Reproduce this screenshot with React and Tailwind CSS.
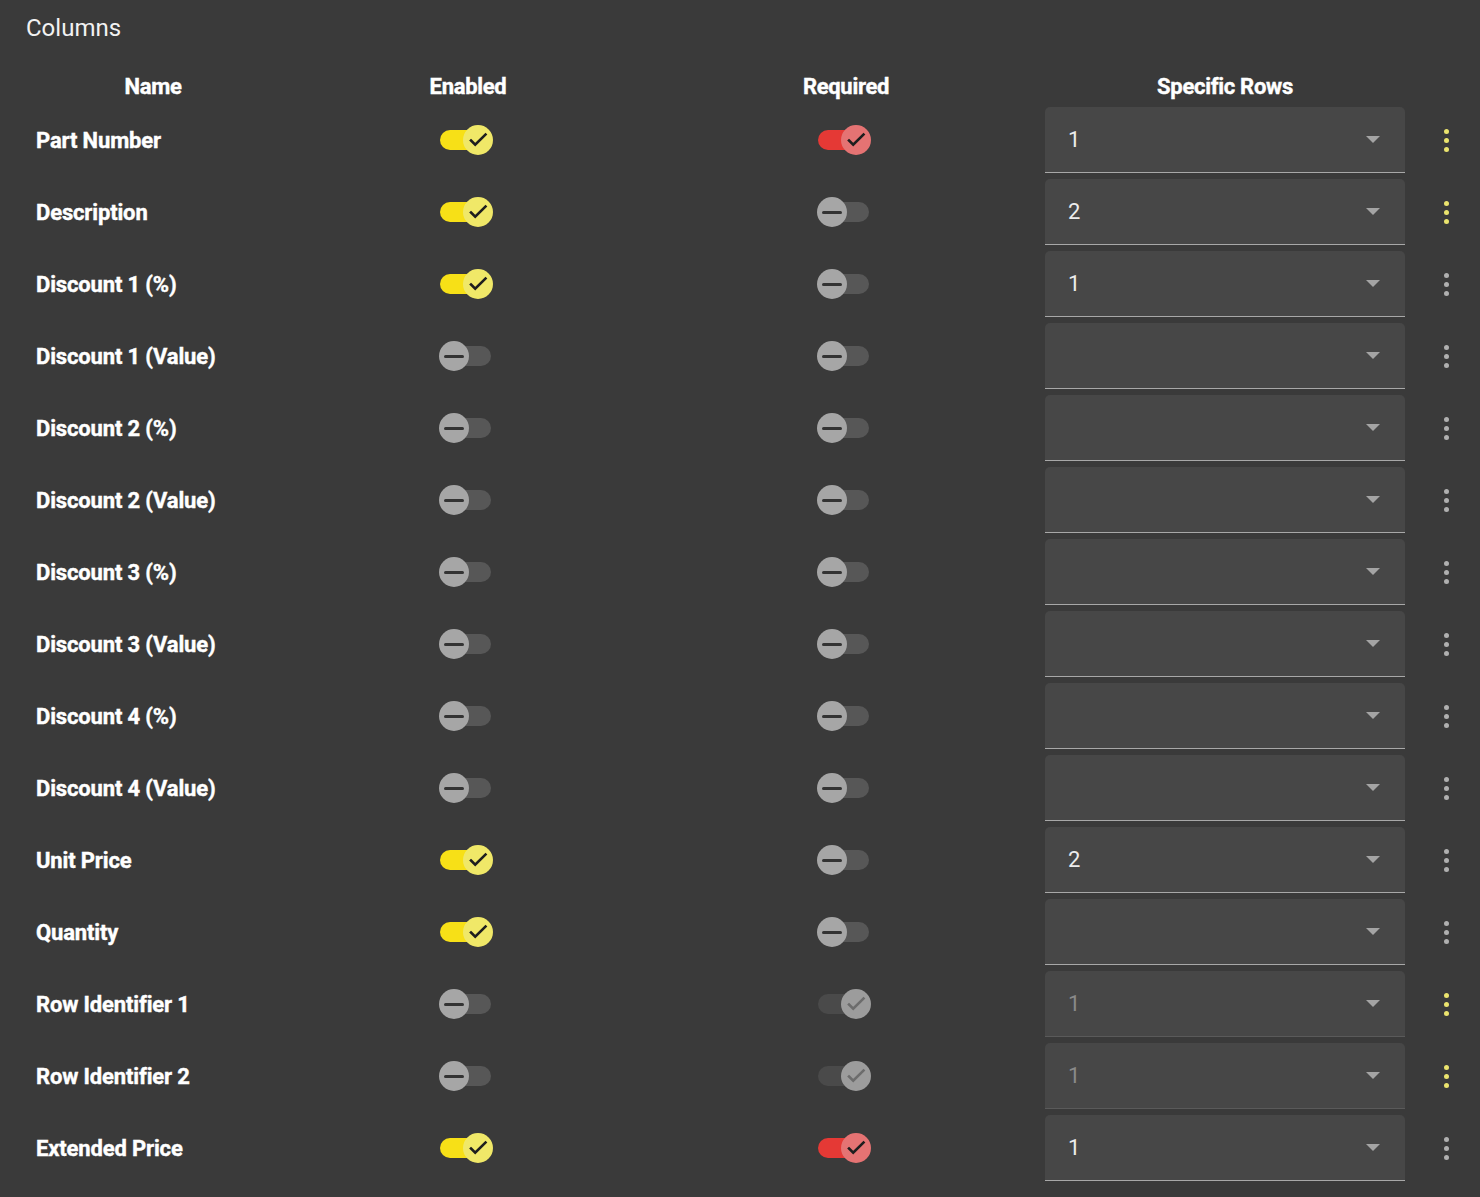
import React from 'react';

const rows = [
  { name: 'Part Number', enabled: true, required: 'on', value: '1', accent: true },
  { name: 'Description', enabled: true, required: 'off', value: '2', accent: true },
  { name: 'Discount 1 (%)', enabled: true, required: 'off', value: '1' },
  { name: 'Discount 1 (Value)', enabled: false, required: 'off', value: '' },
  { name: 'Discount 2 (%)', enabled: false, required: 'off', value: '' },
  { name: 'Discount 2 (Value)', enabled: false, required: 'off', value: '' },
  { name: 'Discount 3 (%)', enabled: false, required: 'off', value: '' },
  { name: 'Discount 3 (Value)', enabled: false, required: 'off', value: '' },
  { name: 'Discount 4 (%)', enabled: false, required: 'off', value: '' },
  { name: 'Discount 4 (Value)', enabled: false, required: 'off', value: '' },
  { name: 'Unit Price', enabled: true, required: 'off', value: '2' },
  { name: 'Quantity', enabled: true, required: 'off', value: '' },
  { name: 'Row Identifier 1', enabled: false, required: 'locked', value: '1', disabled: true, accent: true },
  { name: 'Row Identifier 2', enabled: false, required: 'locked', value: '1', disabled: true, accent: true },
  { name: 'Extended Price', enabled: true, required: 'on', value: '1' },
];

const CheckIcon = ({ className }) => (
  <svg viewBox="0 0 24 24" className={className} fill="none" stroke="currentColor" strokeWidth="2.6" strokeLinecap="square">
    <path d="M5 12.5l4.2 4.2L19.5 6.5" />
  </svg>
);

// variant: yellow | red | off | locked
const Toggle = ({ variant }) => {
  const styles = {
    yellow: { track: 'bg-[#f7e017]', thumb: 'bg-[#f0e868] right-0 text-[#1e1e1e]' },
    red: { track: 'bg-[#e53935]', thumb: 'bg-[#e57373] right-0 text-[#1e1e1e]' },
    off: { track: 'bg-[#575757]', thumb: 'bg-[#a6a6a6] left-0 text-[#333]' },
    locked: { track: 'bg-[#4a4a4a]', thumb: 'bg-[#9c9c9c] right-0 text-[#6c6c6c]' },
  }[variant];

  return (
    <div className="relative w-[54px] h-[30px]">
      <div className={`absolute left-[1px] right-[2px] top-[5px] h-[20px] rounded-full ${styles.track}`} />
      <div className={`absolute top-0 w-[30px] h-[30px] rounded-full flex items-center justify-center ${styles.thumb}`}>
        {variant === 'off' ? (
          <div className="w-[20px] h-[3px] bg-[#333] rounded-sm" />
        ) : (
          <CheckIcon className="w-[24px] h-[24px]" />
        )}
      </div>
    </div>
  );
};

const SelectField = ({ value, disabled }) => (
  <div
    className={`h-[66px] w-full rounded-t-[5px] bg-[#474747] border-b flex items-center justify-between pl-[23px] pr-[25px] ${
      disabled ? 'border-[#5a5a5a]' : 'border-[#a8a8a8]'
    }`}
  >
    <span className={`text-[22px] ${disabled ? 'text-[#8a8a8a]' : 'text-[#ececec]'}`}>{value}</span>
    <span className="w-0 h-0 border-l-[7px] border-r-[7px] border-t-[7px] border-l-transparent border-r-transparent border-t-[#a4a4a4]" />
  </div>
);

const Kebab = ({ accent }) => (
  <div className="flex flex-col items-center gap-[4px]">
    {[0, 1, 2].map((i) => (
      <span key={i} className={`w-[5px] h-[5px] rounded-full ${accent ? 'bg-[#ebe46e]' : 'bg-[#b0b0b0]'}`} />
    ))}
  </div>
);

const gridCols = 'grid grid-cols-[254px_376px_380px_378px_64px]';

export default function App() {
  return (
    <div className="min-h-screen bg-[#3a3a3a] text-white pb-[13px]" style={{ fontFamily: 'Roboto, "Liberation Sans", sans-serif' }}>
      <div className="pl-[26px] pt-[12px] h-[42px] text-[24px] leading-[32px] text-[#f2f2f2]">Columns</div>

      <div className="ml-[26px] mt-[26px]">
        {/* Header */}
        <div className={`${gridCols} h-[36px] items-center text-[22px] font-bold tracking-[-0.3px] [-webkit-text-stroke:0.4px_#fff]`}>
          <div className="text-center">Name</div>
          <div className="text-center">Enabled</div>
          <div className="text-center">Required</div>
          <div className="text-center">Specific Rows</div>
          <div />
        </div>

        {/* Rows */}
        {rows.map((row) => (
          <div key={row.name} className={`${gridCols} h-[72px] items-center`}>
            <div className="pl-[10px] text-[22px] font-bold tracking-[-0.15px] [-webkit-text-stroke:0.4px_#fff]">{row.name}</div>
            <div className="flex justify-center pr-[5px]">
              <Toggle variant={row.enabled ? 'yellow' : 'off'} />
            </div>
            <div className="flex justify-center pr-[4px]">
              <Toggle variant={row.required === 'on' ? 'red' : row.required === 'locked' ? 'locked' : 'off'} />
            </div>
            <div className="px-[9px]">
              <SelectField value={row.value} disabled={row.disabled} />
            </div>
            <div className="flex justify-center">
              <Kebab accent={row.accent} />
            </div>
          </div>
        ))}
      </div>
    </div>
  );
}
